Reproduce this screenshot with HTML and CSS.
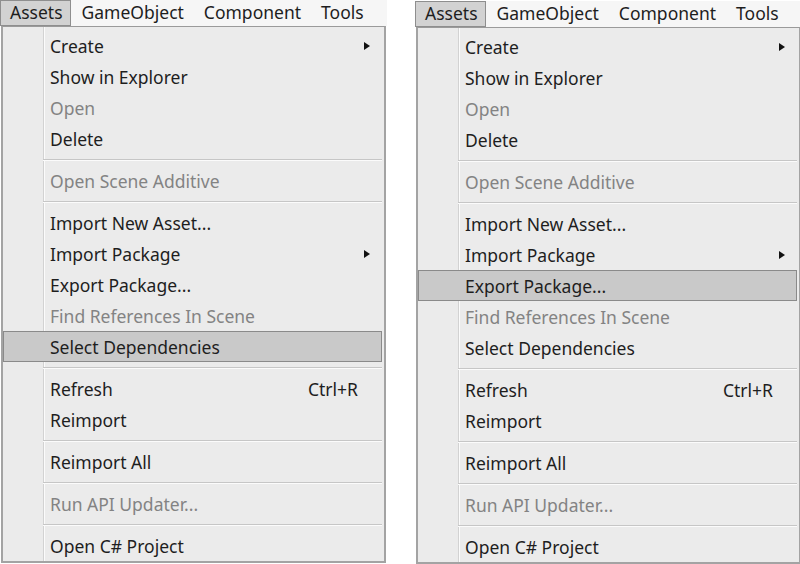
FILE: index.html
```html
<!DOCTYPE html>
<html>
<head>
<meta charset="utf-8">
<link rel="stylesheet" href="styles.css">
</head>
<body>
<div class="stage">
  <div class="panel">
    <div class="menubar">
      <span class="mb-item active">Assets</span>
      <span class="mb-item">GameObject</span>
      <span class="mb-item">Component</span>
      <span class="mb-item">Tools</span>
    </div>
    <div class="menu">
      <div class="item"><span class="label">Create</span><span class="arrow"></span></div>
      <div class="item"><span class="label">Show in Explorer</span></div>
      <div class="item disabled"><span class="label">Open</span></div>
      <div class="item"><span class="label">Delete</span></div>
      <div class="sep"></div>
      <div class="item disabled"><span class="label">Open Scene Additive</span></div>
      <div class="sep"></div>
      <div class="item"><span class="label">Import New Asset...</span></div>
      <div class="item"><span class="label">Import Package</span><span class="arrow"></span></div>
      <div class="item"><span class="label">Export Package...</span></div>
      <div class="item disabled"><span class="label">Find References In Scene</span></div>
      <div class="item hover"><span class="label">Select Dependencies</span></div>
      <div class="sep"></div>
      <div class="item"><span class="label">Refresh</span><span class="shortcut">Ctrl+R</span></div>
      <div class="item"><span class="label">Reimport</span></div>
      <div class="sep"></div>
      <div class="item"><span class="label">Reimport All</span></div>
      <div class="sep"></div>
      <div class="item disabled"><span class="label">Run API Updater...</span></div>
      <div class="sep"></div>
      <div class="item"><span class="label">Open C# Project</span></div>
    </div>
  </div>
  <div class="panel second">
    <div class="menubar">
      <span class="mb-item active">Assets</span>
      <span class="mb-item">GameObject</span>
      <span class="mb-item">Component</span>
      <span class="mb-item">Tools</span>
    </div>
    <div class="menu">
      <div class="item"><span class="label">Create</span><span class="arrow"></span></div>
      <div class="item"><span class="label">Show in Explorer</span></div>
      <div class="item disabled"><span class="label">Open</span></div>
      <div class="item"><span class="label">Delete</span></div>
      <div class="sep"></div>
      <div class="item disabled"><span class="label">Open Scene Additive</span></div>
      <div class="sep"></div>
      <div class="item"><span class="label">Import New Asset...</span></div>
      <div class="item"><span class="label">Import Package</span><span class="arrow"></span></div>
      <div class="item hover"><span class="label">Export Package...</span></div>
      <div class="item disabled"><span class="label">Find References In Scene</span></div>
      <div class="item"><span class="label">Select Dependencies</span></div>
      <div class="sep"></div>
      <div class="item"><span class="label">Refresh</span><span class="shortcut">Ctrl+R</span></div>
      <div class="item"><span class="label">Reimport</span></div>
      <div class="sep"></div>
      <div class="item"><span class="label">Reimport All</span></div>
      <div class="sep"></div>
      <div class="item disabled"><span class="label">Run API Updater...</span></div>
      <div class="sep"></div>
      <div class="item"><span class="label">Open C# Project</span></div>
    </div>
  </div>
</div>
</body>
</html>
```

FILE: styles.css
```css
html, body {
  margin: 0;
  padding: 0;
  background: #ffffff;
  overflow: hidden;
}
body {
  font-family: "Noto Sans", "Open Sans", sans-serif;
  font-size: 17.5px;
  color: #1e1e1e;
}
.stage {
  display: flex;
  gap: 28px;
  width: 800px;
  height: 564px;
  overflow: hidden;
}
.panel {
  flex: 0 0 387px;
  width: 387px;
  display: flex;
  flex-direction: column;
}
.panel.second {
  margin-top: 1px;
}
.menubar {
  display: flex;
  height: 26px;
  background: #f6f6f6;
  align-items: stretch;
}
.mb-item {
  display: flex;
  align-items: center;
  padding: 0 9px 0 10px;
  margin-right: 1px;
  line-height: 1;
}
.mb-item.active {
  background: #d2d2d2;
  border: 1px solid #8e8e8e;
  padding: 0 7px 0 9px;
  margin-right: 1px;
}
.menu {
  margin-left: 1px;
  width: 385px;
  border: 2px solid #a3a3a3;
  border-top: 1px solid #9a9a9a;
  background: #ebebeb linear-gradient(to right, transparent 40px, #d2d2d2 40px, #d2d2d2 41px, #fbfbfb 41px, #fbfbfb 42px, transparent 42px);
  padding: 3px 0 0 0;
  box-sizing: border-box;
  height: 537px;
}
.item {
  display: flex;
  align-items: center;
  height: 31px;
  padding: 0 0 0 47px;
  box-sizing: border-box;
}
.item .label {
  flex: 1;
  white-space: nowrap;
}
.item.disabled {
  color: #838383;
}
.item.hover {
  background: #c9c9c9;
  border: 1px solid #8a8a8a;
  margin: 0 2px 0 0;
  padding-left: 46px;
}
.shortcut {
  margin-right: 26px;
}
.arrow {
  width: 0;
  height: 0;
  border-top: 4.5px solid transparent;
  border-bottom: 4.5px solid transparent;
  border-left: 6px solid #111;
  margin-right: 14px;
}
.item.hover .arrow {
  margin-right: 12px;
}
.sep {
  height: 11px;
  margin-left: 40px;
  margin-right: 2px;
  background: linear-gradient(to bottom, transparent 5px, #c6c6c6 5px, #c6c6c6 6px, #fbfbfb 6px, #fbfbfb 7px, transparent 7px);
}
```
